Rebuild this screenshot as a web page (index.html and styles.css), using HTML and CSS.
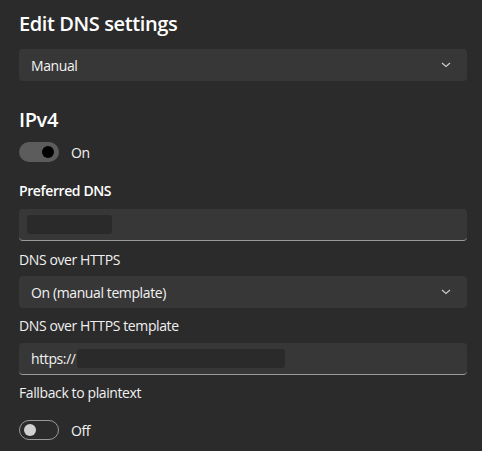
FILE: index.html
```html
<!DOCTYPE html>
<html>
<head>
<meta charset="UTF-8">
<title>Edit DNS settings</title>
<link rel="stylesheet" href="styles.css">
</head>
<body>
	<div id="page">
		<h1 class="titre">Edit DNS settings</h1>
		<div class="liste liste_mode">
			<span>Manual</span>
			<svg class="chevron" width="10" height="6" viewBox="0 0 10 6"><path d="M1 1 L5 4.5 L9 1" fill="none" stroke="#cfcfcf" stroke-width="1.1"/></svg>
		</div>

		<h2 class="section">IPv4</h2>
		<div class="interrupteur interrupteur_ipv4">
			<span class="piste piste_on"><span class="bouton"></span></span>
			<span class="etat">On</span>
		</div>

		<p class="libelle libelle_fort libelle_prefere">Preferred DNS</p>
		<div class="saisie saisie_prefere">
			<span class="masque masque_court"></span>
		</div>

		<p class="libelle libelle_doh">DNS over HTTPS</p>
		<div class="liste liste_doh">
			<span>On (manual template)</span>
			<svg class="chevron" width="10" height="6" viewBox="0 0 10 6"><path d="M1 1 L5 4.5 L9 1" fill="none" stroke="#cfcfcf" stroke-width="1.1"/></svg>
		</div>

		<p class="libelle libelle_modele">DNS over HTTPS template</p>
		<div class="saisie saisie_modele">
			<span>https://</span><span class="masque masque_long"></span>
		</div>

		<p class="libelle libelle_repli">Fallback to plaintext</p>
		<div class="interrupteur interrupteur_repli">
			<span class="piste piste_off"><span class="bouton"></span></span>
			<span class="etat">Off</span>
		</div>
	</div>
</body>
</html>
```

FILE: styles.css
```css
html{
	height:100%;
}

body{
	margin:0;
	background:#2b2b2b;
	color:#fff;
	font:14px "Open Sans", "Noto Sans", sans-serif;
	letter-spacing:-0.028em;
}

div#page{
	padding:10px 15px 0 19px;
}

h1.titre{
	margin:0 0 11px 0;
	font-size:20px;
	line-height:28px;
	font-weight:600;
}

h2.section{
	margin:25px 0 8px 0;
	font-size:20px;
	line-height:28px;
	font-weight:600;
}

.liste{
	height:32px;
	box-sizing:border-box;
	padding:0 16px 0 12px;
	background:#373737;
	border-radius:4px;
	display:flex;
	align-items:center;
	justify-content:space-between;
	color:#f2f2f2;
}

.libelle{
	margin:0;
	line-height:20px;
	color:#f0f0f0;
}
.libelle_fort{
	font-weight:600;
	color:#fff;
}
.libelle_prefere{ margin-top:19px; margin-bottom:8px; }
.libelle_doh{ margin-top:9px; margin-bottom:6px; }
.libelle_modele{ margin-top:8px; margin-bottom:7px; }
.libelle_repli{ margin-top:8px; margin-bottom:17px; }

.saisie{
	height:32px;
	box-sizing:border-box;
	padding:0 12px 0 8px;
	background:#373737;
	border-radius:4px;
	border-bottom:1px solid #9a9a9a;
	display:flex;
	align-items:center;
	color:#f2f2f2;
}
.saisie_modele{
	padding-left:12px;
}

.masque{
	display:inline-block;
	height:19px;
	background:#2a2a2a;
	border-radius:3px;
}
.masque_court{ width:85px; }
.masque_long{ width:208px; margin-left:1px; }

.interrupteur{
	display:flex;
	align-items:center;
	height:20px;
}
.etat{
	margin-left:12px;
	color:#f2f2f2;
}
.piste{
	width:40px;
	height:20px;
	box-sizing:border-box;
	border-radius:10px;
	position:relative;
	display:inline-block;
}
.piste_on{
	background:#5c5c5c;
}
.piste_off{
	border:1px solid #9a9a9a;
}
.bouton{
	position:absolute;
	top:50%;
	width:12px;
	height:12px;
	margin-top:-6px;
	border-radius:50%;
}
.piste_on .bouton{
	right:5px;
	background:#000;
}
.piste_off .bouton{
	left:4px;
	background:#d0d0d0;
}
```
